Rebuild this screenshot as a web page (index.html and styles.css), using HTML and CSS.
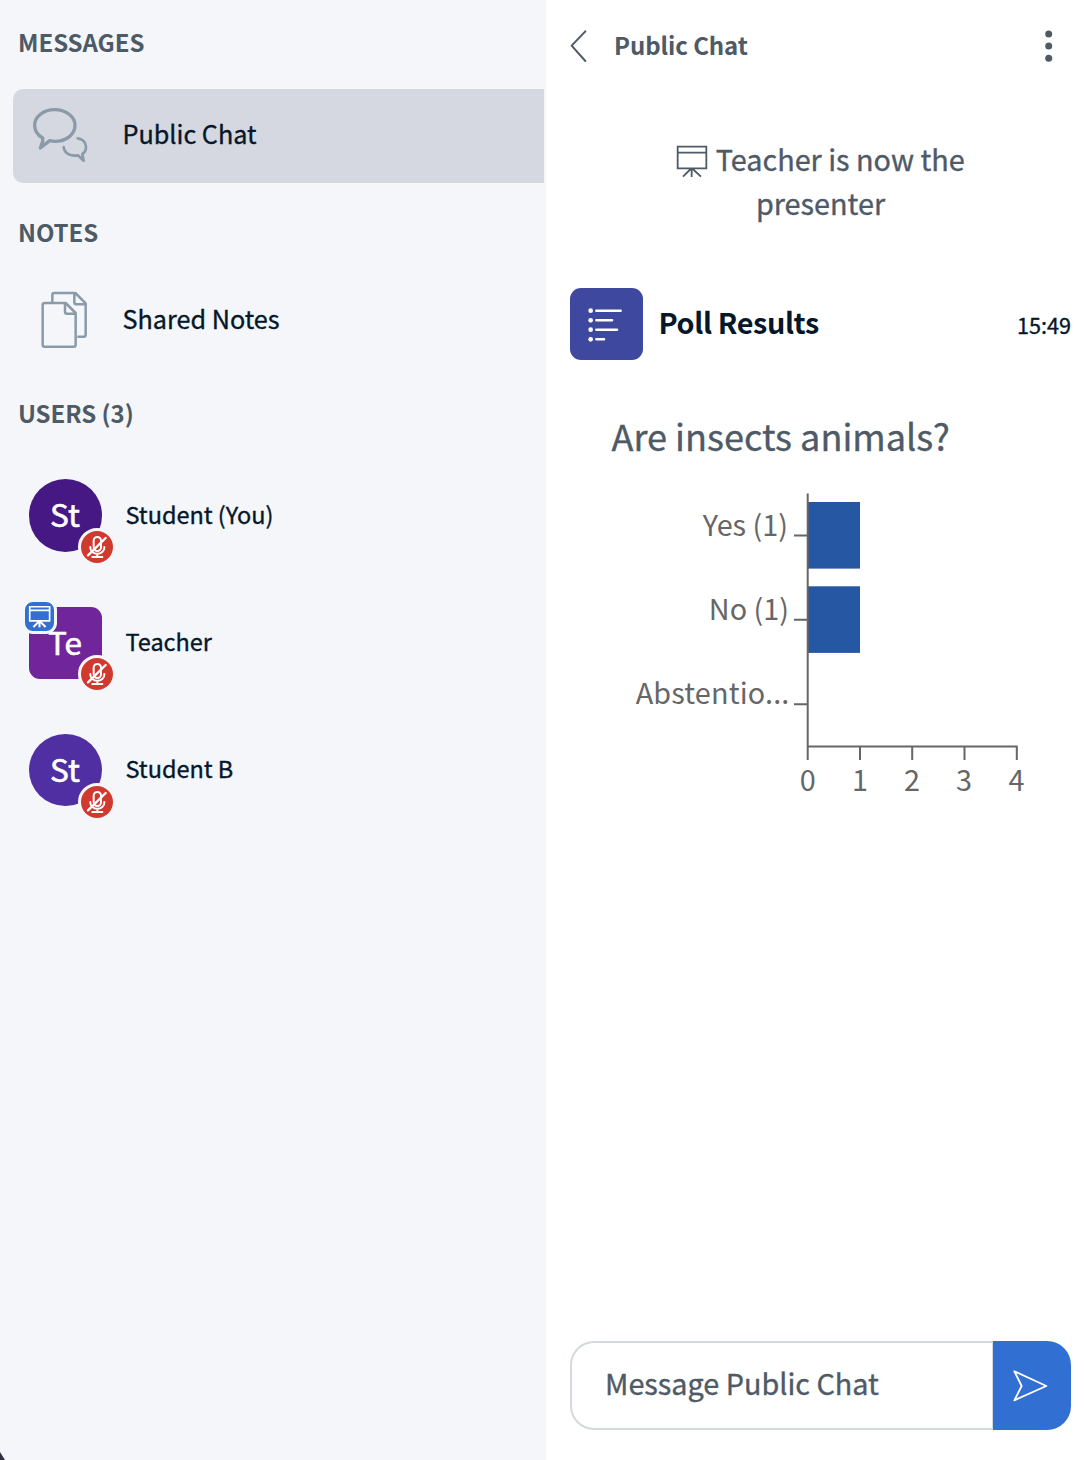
FILE: index.html
```html
<!DOCTYPE html>
<html lang="en">
<head>
<meta charset="utf-8">
<title>Public Chat</title>
<link rel="stylesheet" href="styles.css">
</head>
<body>
<svg class="defs" width="0" height="0" aria-hidden="true">
  <symbol id="mic-off" viewBox="0 0 96 96">
    <g fill="none" stroke="#fff" stroke-width="6" stroke-linecap="round">
      <rect x="38" y="18" width="22" height="42" rx="11"/>
      <path d="M28 48v2a21 18 0 0 0 42 0v-2M49 69v8M34 78h30"/>
      <path d="M21 73L74 21" stroke-width="7"/>
    </g>
  </symbol>
</svg>
<div class="app">
  <aside class="sidebar">
    <h2 class="heading heading-messages">MESSAGES</h2>
    <div class="item item-active">
      <span class="slot slot-chat">
        <svg width="60" height="60" viewBox="90 285 180 180">
          <g fill="none" stroke="#8b9aa9" stroke-linejoin="round" stroke-linecap="round">
            <path stroke-width="10" d="M128 384C112 375 104 362 104 346C104 320 130 299 164 299C198 299 225 320 225 346C225 374 199 394 164 394Q156 394 149 392L121 414L128 394Z"/>
            <path stroke-width="8" d="M233 385C248 386 258 397 258 411C258 421 254 428 247 432L251 452L234 436C212 440 193 430 191 411"/>
          </g>
        </svg>
      </span>
      <span class="item-label">Public Chat</span>
    </div>
    <h2 class="heading heading-notes">NOTES</h2>
    <div class="item">
      <span class="slot slot-notes">
        <svg width="50" height="60" viewBox="120 240 150 180">
          <g fill="none" stroke="#8b9aa9" stroke-width="7.5" stroke-linejoin="round">
            <path d="M157 277V255Q157 249 163 249H226L257 280V374Q257 380 251 380H232M223 250V277Q223 283 229 283H256"/>
            <path d="M134 279H197L227 309V404Q227 410 221 410H134Q128 410 128 404V285Q128 279 134 279ZM195 280V305Q195 311 201 311H226"/>
          </g>
        </svg>
      </span>
      <span class="item-label label-notes">Shared Notes</span>
    </div>
    <h2 class="heading heading-users">USERS (3)</h2>
    <ul class="users">
      <li class="user">
        <span class="avatar avatar-you">St
          <svg class="mic" viewBox="0 0 96 96"><use href="#mic-off"/></svg>
        </span>
        <span class="user-name">Student (You)</span>
      </li>
      <li class="user">
        <span class="avatar avatar-teacher">Te
          <svg class="presenter" viewBox="0 0 86 86">
            <g fill="none" stroke="#fff" stroke-width="5">
              <path d="M14 14H73V56H14ZM14 25H73"/>
              <path d="M43 56V75M40 59L25 74M46 59L61 74" stroke-width="6"/>
            </g>
          </svg>
          <svg class="mic" viewBox="0 0 96 96"><use href="#mic-off"/></svg>
        </span>
        <span class="user-name">Teacher</span>
      </li>
      <li class="user">
        <span class="avatar avatar-b">St
          <svg class="mic" viewBox="0 0 96 96"><use href="#mic-off"/></svg>
        </span>
        <span class="user-name">Student B</span>
      </li>
    </ul>
    <span class="corner"></span>
  </aside>
  <main class="chat">
    <header class="chat-header">
      <svg class="back" width="20" height="34" viewBox="0 0 60 102">
        <path d="M46 7L5 50L46 96" fill="none" stroke="#4e5a66" stroke-width="6" stroke-linecap="round" stroke-linejoin="round"/>
      </svg>
      <h1 class="chat-title">Public Chat</h1>
      <svg class="more" width="8" height="34" viewBox="0 0 8 34" fill="#4e5a66">
        <circle cx="3.7" cy="5" r="3.5"/><circle cx="3.7" cy="17" r="3.5"/><circle cx="3.7" cy="29.2" r="3.5"/>
      </svg>
    </header>
    <p class="notice">
      <svg class="notice-icon" width="34" height="34" viewBox="0 0 102 102">
        <path d="M5 8H91V73H5ZM5 26H91M47 73V99M44 75L21 98M50 75L75 98" fill="none" stroke="#4e5a66" stroke-width="5.4"/>
      </svg>
      Teacher is now the<br>presenter
    </p>
    <div class="poll-head">
      <span class="poll-icon">
        <svg width="36" height="36" viewBox="0 0 108 108">
          <g fill="#fff"><circle cx="8" cy="8" r="7"/><circle cx="8" cy="37" r="7"/><circle cx="8" cy="65" r="7"/><circle cx="8" cy="94" r="7"/></g>
          <path d="M25 8H98M25 37H72M25 65H87M25 94H48" stroke="#fff" stroke-width="7.5" stroke-linecap="round"/>
        </svg>
      </span>
      <strong class="poll-name">Poll Results</strong>
      <time class="poll-time">15:49</time>
    </div>
    <h3 class="question">Are insects animals?</h3>
    <svg class="chart" width="430" height="330" viewBox="620 480 430 330">
      <g fill="#2657a2">
        <rect x="808" y="502" width="52" height="66.6"/>
        <rect x="808" y="586.3" width="52" height="66.6"/>
      </g>
      <path d="M807.7 493.5V760M794 535.5H807M794 619.8H807M794 704.2H807M807 746.5H1017.5M860 746V760M912.2 746V760M964.5 746V760M1016.8 746V760" fill="none" stroke="#666" stroke-width="2"/>
      <g class="cat">
        <text x="788" y="535.5">Yes (1)</text>
        <text x="789" y="620">No (1)</text>
        <text class="cut" x="789.5" y="704">Abstentio...</text>
      </g>
      <g class="ticks">
        <text x="807.7" y="791">0</text>
        <text x="860" y="791">1</text>
        <text x="912" y="791">2</text>
        <text x="964" y="791">3</text>
        <text x="1016.5" y="791">4</text>
      </g>
    </svg>
    <div class="composer">
      <div class="field">Message Public Chat</div>
      <div class="send">
        <svg width="38" height="34" viewBox="0 0 114 102">
          <path d="M7 7L103 51L7 94L29 51Z" fill="none" stroke="#fff" stroke-width="5.5" stroke-linejoin="round"/>
        </svg>
      </div>
    </div>
  </main>
</div>
</body>
</html>
```
FILE: styles.css
```css
* { box-sizing: border-box; }
body {
  margin: 0;
  background: #fff;
  color: #06172a;
  font-family: "Noto Sans CJK SC", "Noto Sans", sans-serif;
  -webkit-text-stroke: 0.35px currentColor;
}
h1, h2, h3, p, ul { margin: 0; padding: 0; font-weight: inherit; }
svg { flex: none; display: block; }
.defs { position: absolute; }
.app { display: flex; width: 1090px; height: 1460px; overflow: hidden; }

.sidebar {
  position: relative;
  width: 546px;
  flex: none;
  padding-top: 24px;
  background: #f4f6fa;
}
.heading, .chat-title, .poll-name { -webkit-text-stroke-width: 0; }
.heading {
  height: 36px;
  padding-left: 18px;
  font-size: 24px;
  line-height: 36px;
  font-weight: 700;
  letter-spacing: -0.05px;
  color: #4e5a66;
}
.heading-messages { margin-bottom: 29px; }
.heading-notes { margin: 31px 0 24px; }
.heading-users { margin: 27px 0 21px; }
.item {
  display: flex;
  align-items: center;
  height: 94px;
  margin: 0 2px 0 13px;
  border-radius: 10px 0 0 10px;
}
.item-active { background: #d5d8e0; }
.slot { width: 110px; flex: none; }
.slot-chat { padding: 0 0 2px 17px; }
.slot-notes { padding: 0 0 2px 27px; }
.item-label { margin-left: -0.5px; padding-bottom: 6px; font-size: 25.2px; line-height: 36px; white-space: nowrap; }

.users { list-style: none; }
.user { display: flex; align-items: center; height: 127.3px; padding-left: 29px; }
.avatar {
  position: relative;
  width: 73px;
  height: 72.4px;
  flex: none;
  padding-right: 1px;
  border-radius: 50%;
  color: #fff;
  font-size: 31.5px;
  line-height: 68px;
  text-align: center;
  -webkit-text-stroke-width: 0.6px;
}
.avatar-you { background: #451883; }
.avatar-teacher { background: #70259b; border-radius: 11px; }
.avatar-b { background: #4f2fa2; }
.mic {
  position: absolute;
  left: 49px;
  top: 48.5px;
  width: 38px;
  height: 38px;
  border: 3px solid #f4f6fa;
  border-radius: 50%;
  background: #d03a2e;
}
.presenter {
  position: absolute;
  left: -7px;
  top: -8px;
  width: 35px;
  height: 35px;
  border: 3px solid #f4f6fa;
  border-radius: 11px;
  background: #326fd2;
}
.user-name { padding: 0 0 4px 23.5px; font-size: 23.5px; line-height: 36px; letter-spacing: -0.04px; white-space: nowrap; }
.corner {
  position: absolute;
  left: 0;
  bottom: 0;
  width: 5px;
  height: 8px;
  background: #33303f;
  clip-path: polygon(0 0, 100% 100%, 0 100%);
}

.chat {
  display: flex;
  flex-direction: column;
  flex: 1;
  padding: 29px 19px 30px 24px;
}
.chat-header { display: flex; align-items: center; height: 34px; }
.chat-title {
  flex: 1;
  margin-left: 24px;
  padding-bottom: 2px;
  font-size: 24px;
  line-height: 34px;
  font-weight: 700;
  letter-spacing: -0.08px;
  color: #4e5a66;
}
.more { margin-right: 18px; }
.notice {
  margin-top: 74px;
  height: 88px;
  font-size: 28.8px;
  line-height: 44px;
  text-align: center;
  color: #4e5a66;
}
.notice-icon { display: inline-block; margin-right: -1px; vertical-align: -7px; }
.poll-head { display: flex; align-items: center; height: 72px; margin-top: 63px; }
.poll-icon {
  display: flex;
  width: 73px;
  height: 72px;
  padding: 20px 0 0 18px;
  border-radius: 11px;
  background: #3f489f;
}
.poll-name { flex: 1; margin-left: 15.5px; padding-bottom: 4px; font-size: 28.8px; line-height: 40px; letter-spacing: -0.38px; }
.poll-time { padding-top: 2px; font-size: 21.6px; line-height: 30px; }
.question { margin: 51px 0 0 41.5px; font-size: 36.1px; line-height: 48px; color: #4e5a66; white-space: nowrap; }
.chart { margin: 21px 0 0 50px; overflow: visible; font-size: 28.8px; fill: #666; }
.cat { text-anchor: end; }
.cut { letter-spacing: 0.15px; }
.ticks { text-anchor: middle; }
.composer { display: flex; height: 89px; margin-top: auto; }
.field {
  flex: 1;
  padding: 0 0 4px 33px;
  border: 2px solid #d4d9df;
  border-right-width: 1px;
  border-radius: 24px 0 0 24px;
  font-size: 28.8px;
  line-height: 79px;
  color: #4e5a66;
}
.send {
  display: flex;
  align-items: center;
  width: 78px;
  padding-left: 19px;
  border-radius: 0 24px 24px 0;
  background: #326fd2;
}
```
